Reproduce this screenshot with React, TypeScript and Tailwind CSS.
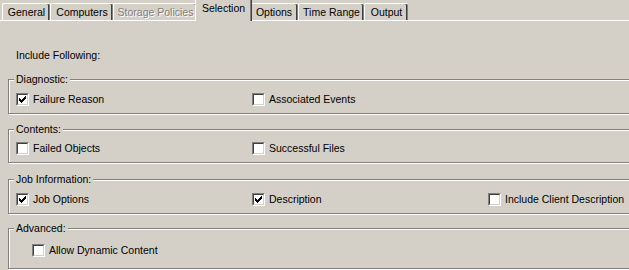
import type { ReactNode } from 'react';

const tabs = [
  { label: 'General', w: 'w-[48px]' },
  { label: 'Computers', w: 'w-[63px]' },
  { label: 'Storage Policies', w: 'w-[84px]', disabled: true },
  { label: 'Selection', w: 'w-[55px]', active: true },
  { label: 'Options', w: 'w-[49px]' },
  { label: 'Time Range', w: 'w-[66px]' },
  { label: 'Output', w: 'w-[44px]' },
];

function Tab({ label, w, active, disabled }: { label: string; w: string; active?: boolean; disabled?: boolean }) {
  if (active) {
    return (
      <div
        className={`${w} relative z-10 -mx-[2px] -mb-[1px] h-[20px] flex items-start justify-center pt-[3px] bg-[#d4d0c8] border-l border-t border-white rounded-tl-[2px] rounded-tr-[2px] shadow-[inset_-1px_0_0_#808080,1px_0_0_#404040] box-content`}
      >
        {label}
      </div>
    );
  }
  return (
    <div
      className={`${w} h-[17px] flex items-center justify-center pt-[1px] border-l border-t border-white rounded-tl-[2px] rounded-tr-[2px] shadow-[inset_-1px_0_0_#808080,inset_-2px_0_0_#404040] ${
        disabled ? 'text-[#808080] [text-shadow:1px_1px_0_#fff]' : ''
      }`}
    >
      {label}
    </div>
  );
}

function Check({ checked, label }: { checked?: boolean; label: string }) {
  return (
    <div className="flex items-center gap-[4px] h-[13px]">
      <div className="w-[13px] h-[13px] border border-t-[#808080] border-l-[#808080] border-b-white border-r-white">
        <div className="w-[11px] h-[11px] bg-white border border-t-[#404040] border-l-[#404040] border-b-[#d4d0c8] border-r-[#d4d0c8] relative">
          {checked && (
            <svg width="7" height="7" viewBox="0 0 7 7" className="absolute left-[1px] top-[1px]" shapeRendering="crispEdges">
              <path d="M6 0h1v3h-1zM5 1h1v3h-1zM4 2h1v3h-1zM3 3h1v3h-1zM2 4h1v3h-1zM1 3h1v3h-1zM0 2h1v3h-1z" fill="#000" />
            </svg>
          )}
        </div>
      </div>
      <span className="leading-[13px]">{label}</span>
    </div>
  );
}

function Group({ title, h, className, children }: { title: string; h: string; className?: string; children: ReactNode }) {
  return (
    <div
      className={`relative ml-[8px] w-[640px] ${h} border border-[#808080] shadow-[inset_1px_1px_0_#fff,1px_1px_0_#fff] ${className ?? ''}`}
    >
      <span className="absolute left-[5px] -top-[7px] px-[2px] bg-[#d4d0c8] leading-[13px]">{title}</span>
      {children}
    </div>
  );
}

export default function App() {
  return (
    <div className="w-[629px] h-[270px] overflow-hidden bg-[#d4d0c8] text-black text-[10.5px] font-['Liberation_Sans',Arial,sans-serif]">
      <div className="flex items-end h-[20px] pl-[2px]">
        {tabs.map((t) => (
          <Tab key={t.label} {...t} />
        ))}
      </div>
      <div className="border-t border-white">
        <div className="pl-[16px] pt-[28px] leading-[13px]">Include Following:</div>

        <Group title="Diagnostic:" h="h-[35px]" className="mt-[17px]">
          <div className="grid grid-cols-[236px_236px_1fr] pl-[7px] pt-[13px]">
            <Check checked label="Failure Reason" />
            <Check label="Associated Events" />
          </div>
        </Group>

        <Group title="Contents:" h="h-[34px]" className="mt-[15px]">
          <div className="grid grid-cols-[236px_236px_1fr] pl-[7px] pt-[12px]">
            <Check label="Failed Objects" />
            <Check label="Successful Files" />
          </div>
        </Group>

        <Group title="Job Information:" h="h-[35px]" className="mt-[16px]">
          <div className="grid grid-cols-[236px_236px_1fr] pl-[7px] pt-[13px]">
            <Check checked label="Job Options" />
            <Check checked label="Description" />
            <Check label="Include Client Description" />
          </div>
        </Group>

        <Group title="Advanced:" h="h-[41px]" className="mt-[14px]">
          <div className="pl-[23px] pt-[15px]">
            <Check label="Allow Dynamic Content" />
          </div>
        </Group>
      </div>
    </div>
  );
}
